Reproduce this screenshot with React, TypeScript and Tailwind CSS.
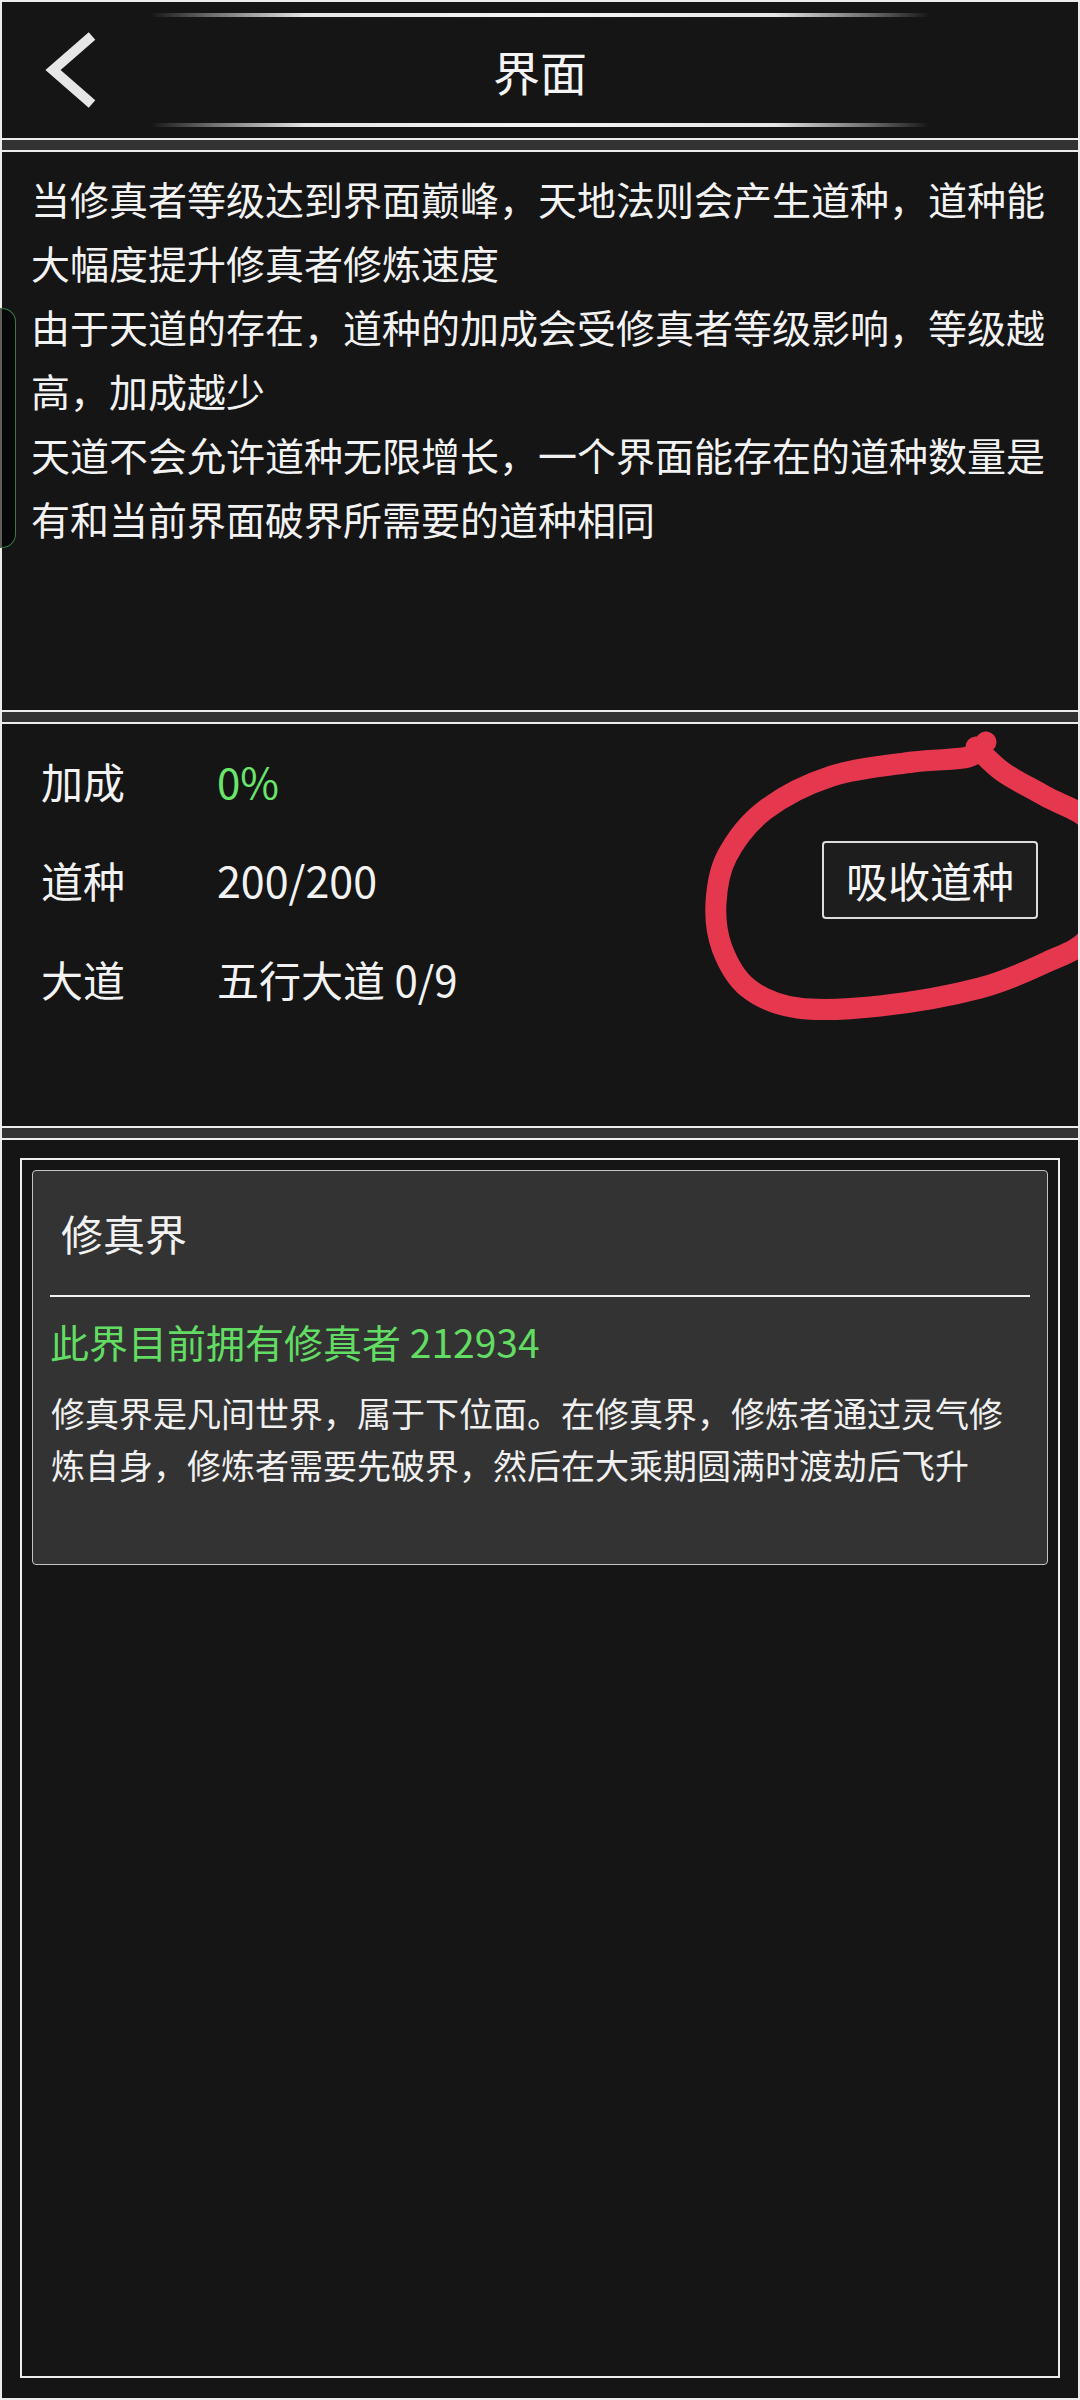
type Pt = [number, number]

// hand-drawn marker loop around the button, in page coordinates
const loop: Pt[] = [
  [976, 747],
  [1003, 772],
  [1045, 796],
  [1092, 824],
  [1112, 884],
  [1088, 938],
  [1047, 962],
  [980, 988],
  [880, 1006],
  [798, 1008],
  [748, 988],
  [722, 948],
  [716, 903],
  [727, 856],
  [765, 810],
  [832, 776],
  [913, 762],
  [968, 757],
  [986, 742],
]

function smoothPath(p: Pt[]) {
  let d = `M${p[0][0]},${p[0][1]}`
  for (let i = 0; i < p.length - 1; i++) {
    const p0 = p[i - 1] ?? p[i]
    const p1 = p[i]
    const p2 = p[i + 1]
    const p3 = p[i + 2] ?? p2
    const c1x = p1[0] + (p2[0] - p0[0]) / 6
    const c1y = p1[1] + (p2[1] - p0[1]) / 6
    const c2x = p2[0] - (p3[0] - p1[0]) / 6
    const c2y = p2[1] - (p3[1] - p1[1]) / 6
    d += ` C${c1x},${c1y} ${c2x},${c2y} ${p2[0]},${p2[1]}`
  }
  return d
}

function Gleam() {
  return (
    <div className="mx-[148px] h-[4px] bg-[linear-gradient(to_right,rgba(255,255,255,0)_0%,rgba(200,200,200,0.5)_8%,#e6e6e6_20%,#f4f4f4_50%,#e6e6e6_80%,rgba(200,200,200,0.5)_92%,rgba(255,255,255,0)_100%)]" />
  )
}

function Band() {
  return <div className="h-[10px] bg-[#333333]" />
}

function StatRow({ label, children }: { label: string; children: React.ReactNode }) {
  return (
    <div className="flex h-[99px] items-center">
      <span className="w-[176px] text-[42px] leading-none text-[#f2f2f2]">{label}</span>
      {children}
    </div>
  )
}

export default function App() {
  return (
    <div className="relative flex min-h-[2400px] flex-col gap-[2px] bg-[#ececec] p-[2px] font-['Noto_Sans_CJK_SC','Noto_Sans',sans-serif]">
      {/* header */}
      <div className="flex h-[136px] flex-col bg-[#151515] pt-[11px] pb-[11px]">
        <Gleam />
        <div className="grid flex-1 grid-cols-[148px_1fr_148px] items-center">
          <svg width="64" height="84" viewBox="0 0 64 84" className="ml-[38px]">
            <polyline
              points="52,8 13,42 52,76"
              fill="none"
              stroke="#e6e6e6"
              strokeWidth="10"
              strokeLinejoin="miter"
            />
          </svg>
          <h1 className="text-center text-[47px] leading-none font-normal text-[#f4f4f4]">界面</h1>
          <div />
        </div>
        <Gleam />
      </div>

      <Band />

      {/* description */}
      <div className="relative h-[558px] bg-[#151515] pt-[14px] pr-[30px] pl-[29px] text-[39px] leading-[64px] text-[#f2f2f2]">
        <p>当修真者等级达到界面巅峰，天地法则会产生道种，道种能大幅度提升修真者修炼速度</p>
        <p>由于天道的存在，道种的加成会受修真者等级影响，等级越高，加成越少</p>
        <p>天道不会允许道种无限增长，一个界面能存在的道种数量是有和当前界面破界所需要的道种相同</p>
      </div>

      <Band />

      {/* stats */}
      <div className="relative h-[402px] overflow-hidden bg-[#151515] pt-[7px] pr-[40px] pl-[39px]">
        <StatRow label="加成">
          <span className="text-[42px] leading-none text-[#6be46b]">0%</span>
        </StatRow>
        <StatRow label="道种">
          <span className="flex-1 text-[43px] leading-none text-[#f2f2f2]">200/200</span>
          <button
            type="button"
            className="h-[78px] w-[216px] rounded-[4px] border-2 border-[#dcdcdc] bg-[#1d1d1d] text-[42px] leading-none text-[#f5f5f5]"
          >
            吸收道种
          </button>
        </StatRow>
        <StatRow label="大道">
          <span className="text-[42px] leading-none text-[#f2f2f2]">五行大道 0/9</span>
        </StatRow>
        <svg
          className="pointer-events-none absolute top-0 left-0"
          width="1076"
          height="402"
          viewBox="2 724 1076 402"
        >
          <path
            d={smoothPath(loop)}
            fill="none"
            stroke="#e5384f"
            strokeWidth="21"
            strokeLinecap="round"
            strokeLinejoin="round"
          />
        </svg>
      </div>

      <Band />

      {/* realm */}
      <div className="flex-1 bg-[#151515] px-[18px] pt-[18px] pb-[18px]">
        <div className="h-[1220px] border-2 border-[#eeeeee] p-[10px]">
          <div className="h-[395px] rounded-[4px] border-[1.5px] border-[#c4c4c4] bg-[#333333]">
            <div className="flex h-[124px] items-center pl-[28px] text-[42px] leading-none text-[#f2f2f2]">
              修真界
            </div>
            <div className="mx-[17px] h-[2px] bg-[#f2f2f2]" />
            <p className="mt-[18px] pl-[17px] text-[39px] leading-[52px] text-[#62dc62]">
              此界目前拥有修真者 212934
            </p>
            <p className="mt-[20px] pr-[30px] pl-[18px] text-[34px] leading-[52px] text-[#f0f0f0]">
              修真界是凡间世界，属于下位面。在修真界，修炼者通过灵气修炼自身，修炼者需要先破界，然后在大乘期圆满时渡劫后飞升
            </p>
          </div>
        </div>
      </div>

      {/* floating side handle */}
      <div className="absolute top-[308px] left-0 h-[240px] w-[16px] rounded-r-[14px] border border-l-0 border-[#3b7a45] bg-black/60" />
    </div>
  )
}
